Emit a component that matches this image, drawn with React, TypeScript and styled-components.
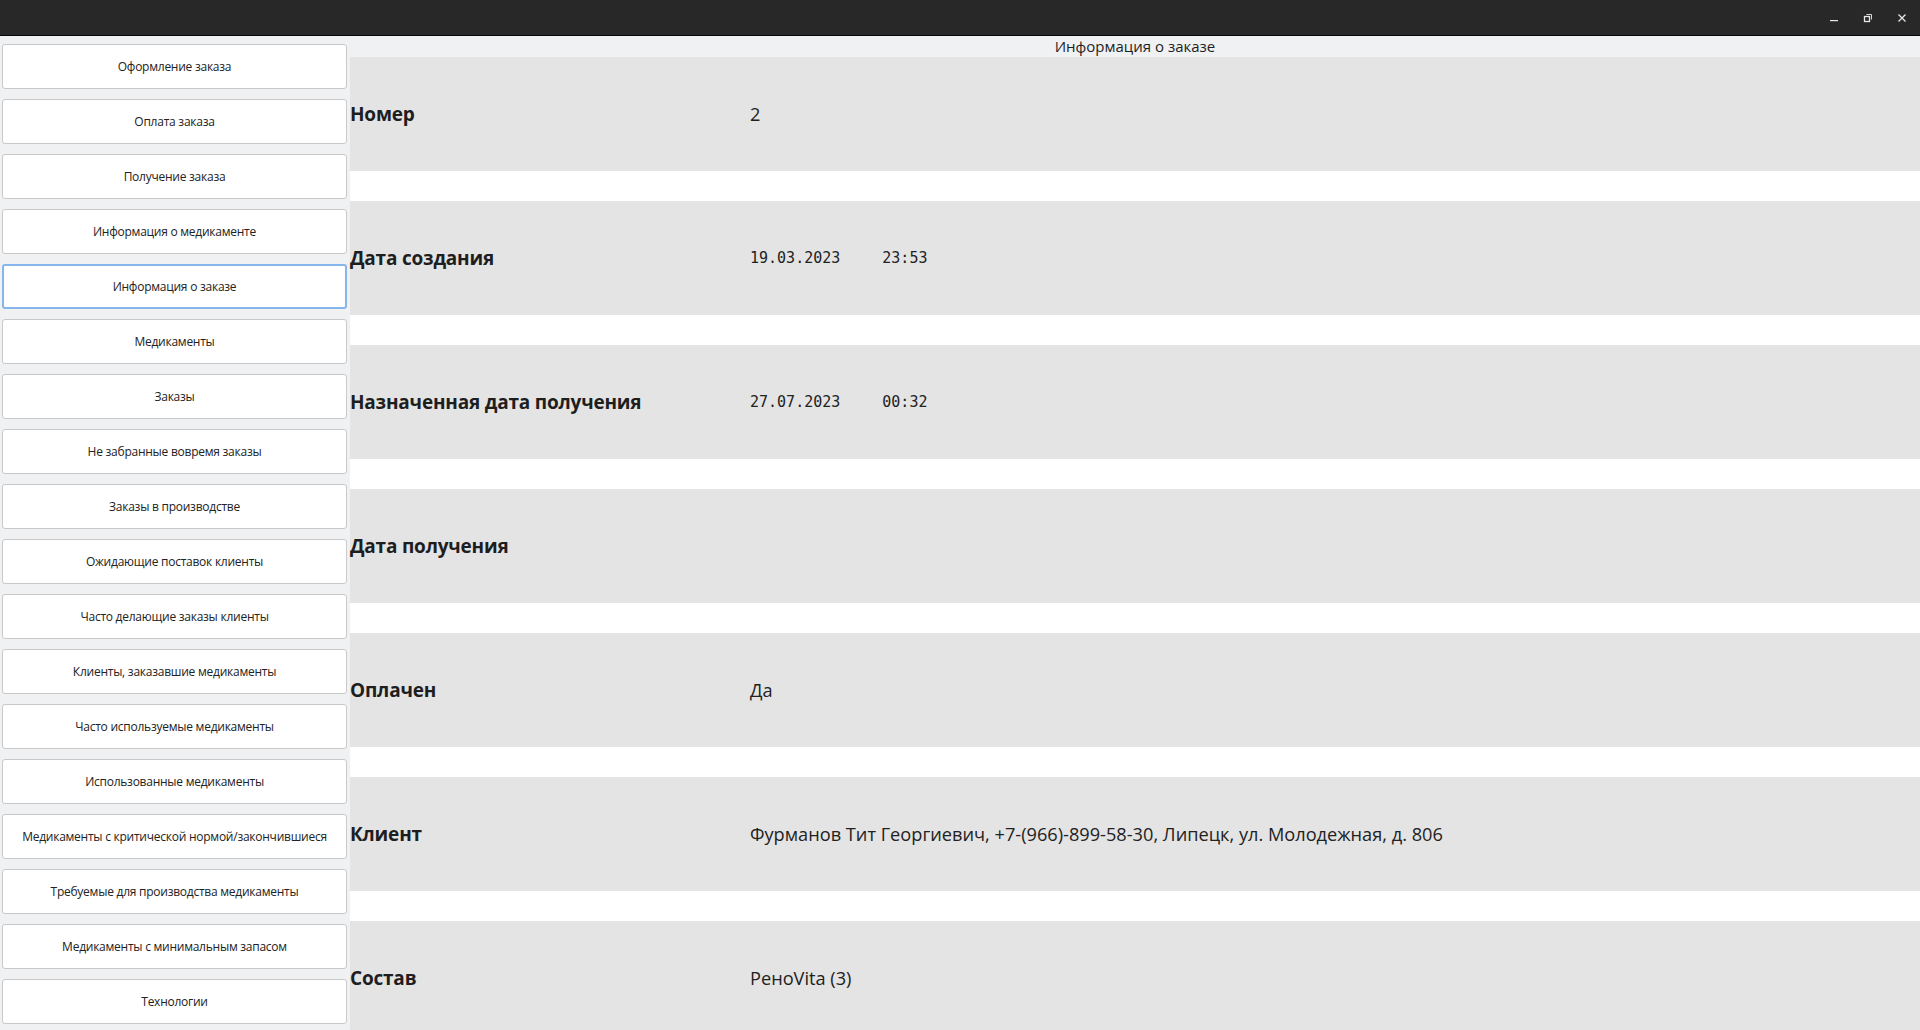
import styled, { createGlobalStyle } from 'styled-components';

const GlobalStyle = createGlobalStyle`
  html, body {
    margin: 0;
    padding: 0;
    height: 1030px;
    overflow: hidden;
    background: #f0f1f3;
  }
  #root {
    height: 100%;
  }
`;

const WindowStyle = styled.div`
  display: flex;
  flex-direction: column;
  height: 1030px;
  overflow: hidden;
  font-family: 'Open Sans', 'Noto Sans', sans-serif;
  color: #1e1e1e;
`;

const TitleBarStyle = styled.div`
  height: 35px;
  flex-shrink: 0;
  background: #282828;
  border-bottom: 1px solid #0a0a0a;
  display: flex;
  justify-content: flex-end;
  align-items: center;
  padding-right: 10px;
  column-gap: 18px;
`;

const ControlButton = styled.div`
  width: 16px;
  height: 16px;
  display: flex;
  align-items: center;
  justify-content: center;
  color: #e8e8e8;
`;

const BodyStyle = styled.div`
  flex: 1;
  display: flex;
  min-height: 0;
`;

const SidebarStyle = styled.div`
  width: 345px;
  flex-shrink: 0;
  padding: 8px 3px 0 2px;
  display: flex;
  flex-direction: column;
  row-gap: 10px;
`;

const MenuButton = styled.button<{ $active?: boolean }>`
  height: 45px;
  flex-shrink: 0;
  background: #ffffff;
  border: ${(p) => (p.$active ? '2px solid #86b6ec' : '1px solid #c9c9c9')};
  border-radius: 3px;
  font-family: 'Open Sans', 'Noto Sans', sans-serif;
  font-size: 12px;
  letter-spacing: -0.25px;
  color: #222;
  padding: 0;
  cursor: pointer;
`;

const ContentStyle = styled.div`
  flex: 1;
  display: flex;
  flex-direction: column;
  min-width: 0;
`;

const ContentTitle = styled.div`
  height: 21px;
  flex-shrink: 0;
  text-align: center;
  font-size: 15px;
  line-height: 20px;
  color: #1e1e1e;
`;

const RowsStyle = styled.div`
  display: flex;
  flex-direction: column;
  row-gap: 30px;
  background: #ffffff;
`;

const InfoRow = styled.div`
  height: 114px;
  flex-shrink: 0;
  background: #e4e4e4;
  display: grid;
  grid-template-columns: 400px 1fr;
  align-items: center;
`;

const LabelStyle = styled.div`
  font-size: 19px;
  font-weight: 700;
  letter-spacing: -0.2px;
  color: #1e1e1e;
  white-space: nowrap;
`;

const ValueStyle = styled.div`
  font-size: 18.2px;
  color: #222;
  white-space: nowrap;
`;

const DateStyle = styled.div`
  display: flex;
  column-gap: 42px;
  font-family: 'DejaVu Sans Mono', 'Liberation Mono', monospace;
  font-size: 15px;
  color: #222;
`;

const menuItems = [
  'Оформление заказа',
  'Оплата заказа',
  'Получение заказа',
  'Информация о медикаменте',
  'Информация о заказе',
  'Медикаменты',
  'Заказы',
  'Не забранные вовремя заказы',
  'Заказы в производстве',
  'Ожидающие поставок клиенты',
  'Часто делающие заказы клиенты',
  'Клиенты, заказавшие медикаменты',
  'Часто используемые медикаменты',
  'Использованные медикаменты',
  'Медикаменты с критической нормой/закончившиеся',
  'Требуемые для производства медикаменты',
  'Медикаменты с минимальным запасом',
  'Технологии',
];

type Row = { label: string; value?: string; date?: [string, string] };

const rows: Row[] = [
  { label: 'Номер', value: '2' },
  { label: 'Дата создания', date: ['19.03.2023', '23:53'] },
  { label: 'Назначенная дата получения', date: ['27.07.2023', '00:32'] },
  { label: 'Дата получения' },
  { label: 'Оплачен', value: 'Да' },
  {
    label: 'Клиент',
    value: 'Фурманов Тит Георгиевич, +7-(966)-899-58-30, Липецк, ул. Молодежная, д. 806',
  },
  { label: 'Состав', value: 'РеноVita (3)' },
];

export default function App() {
  return (
    <>
      <GlobalStyle />
      <WindowStyle>
        <TitleBarStyle>
          <ControlButton>
            <svg width="10" height="10" viewBox="0 0 10 10">
              <rect x="1" y="7" width="8" height="1.2" fill="currentColor" />
            </svg>
          </ControlButton>
          <ControlButton>
            <svg width="10" height="10" viewBox="0 0 10 10" fill="none" stroke="currentColor">
              <rect x="1.5" y="3.5" width="5" height="5" strokeWidth="1.3" />
              <path d="M3.5 1.5h5v5" strokeWidth="0.9" />
            </svg>
          </ControlButton>
          <ControlButton>
            <svg width="10" height="10" viewBox="0 0 10 10" stroke="currentColor" strokeWidth="1.3">
              <path d="M1.5 1.5l7 7M8.5 1.5l-7 7" />
            </svg>
          </ControlButton>
        </TitleBarStyle>
        <BodyStyle>
          <SidebarStyle>
            {menuItems.map((item, index) => (
              <MenuButton key={item} $active={index === 4}>
                {item}
              </MenuButton>
            ))}
          </SidebarStyle>
          <ContentStyle>
            <ContentTitle>Информация о заказе</ContentTitle>
            <RowsStyle>
              {rows.map((row) => (
                <InfoRow key={row.label}>
                  <LabelStyle>{row.label}</LabelStyle>
                  {row.date ? (
                    <DateStyle>
                      <span>{row.date[0]}</span>
                      <span>{row.date[1]}</span>
                    </DateStyle>
                  ) : (
                    <ValueStyle>{row.value}</ValueStyle>
                  )}
                </InfoRow>
              ))}
            </RowsStyle>
          </ContentStyle>
        </BodyStyle>
      </WindowStyle>
    </>
  );
}
